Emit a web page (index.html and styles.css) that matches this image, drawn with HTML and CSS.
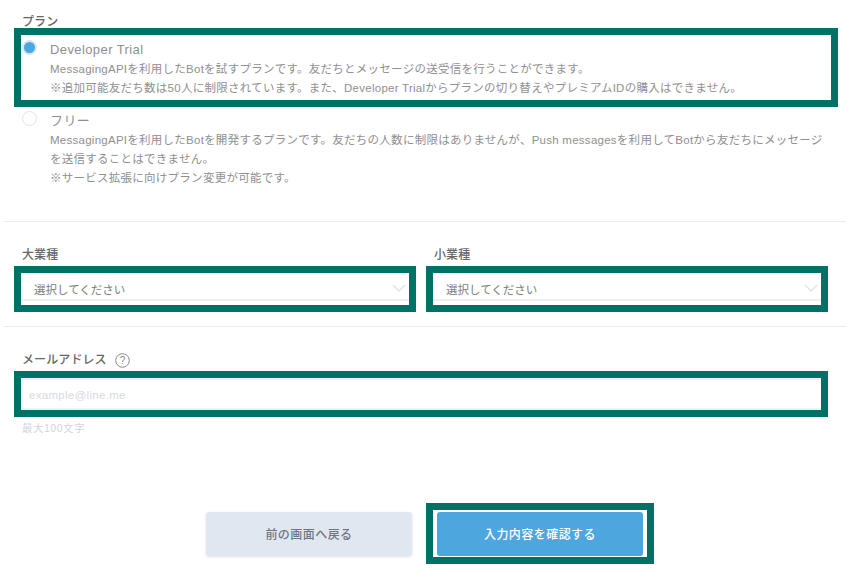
FILE: index.html
```html
<!DOCTYPE html>
<html lang="ja">
<head>
<meta charset="utf-8">
<title>プラン</title>
<link rel="stylesheet" href="styles.css">
</head>
<body>
<main class="page">
  <section class="section section-plan">
    <div class="label plan-label">プラン</div>
    <div class="mark plan-mark">
      <div class="option">
        <span class="radio radio-on"></span>
        <div class="option-body">
          <div class="option-title">Developer Trial</div>
          <div>MessagingAPIを利用したBotを試すプランです。友だちとメッセージの送受信を行うことができます。</div>
          <div>※追加可能友だち数は50人に制限されています。また、Developer Trialからプランの切り替えやプレミアムIDの購入はできません。</div>
        </div>
      </div>
    </div>
    <div class="option option-free">
      <span class="radio"></span>
      <div class="option-body">
        <div class="option-title">フリー</div>
        <div>MessagingAPIを利用したBotを開発するプランです。友だちの人数に制限はありませんが、Push messagesを利用してBotから友だちにメッセージを送信することはできません。</div>
        <div>※サービス拡張に向けプラン変更が可能です。</div>
      </div>
    </div>
  </section>

  <section class="section section-industry">
    <div class="col">
      <div class="label">大業種</div>
      <div class="mark select-mark">
        <div class="select">
          <span>選択してください</span>
          <svg class="chevron" width="14" height="8" viewBox="0 0 14 8"><path d="M1 1l6 6 6-6" fill="none" stroke="#dfe3e8" stroke-width="1.4"/></svg>
        </div>
      </div>
    </div>
    <div class="col">
      <div class="label">小業種</div>
      <div class="mark select-mark">
        <div class="select">
          <span>選択してください</span>
          <svg class="chevron" width="14" height="8" viewBox="0 0 14 8"><path d="M1 1l6 6 6-6" fill="none" stroke="#dfe3e8" stroke-width="1.4"/></svg>
        </div>
      </div>
    </div>
  </section>

  <section class="section-mail">
    <div class="label mail-label">
      <span>メールアドレス</span>
      <svg class="help" width="15" height="15" viewBox="0 0 15 15"><circle cx="7.5" cy="7.5" r="6.8" fill="none" stroke="#8a8a8a"/><text x="7.5" y="11" text-anchor="middle" class="help-q">?</text></svg>
    </div>
    <div class="mark mail-mark">
      <input class="mail-input" type="text" placeholder="example@line.me">
    </div>
    <div class="hint">最大100文字</div>
  </section>

  <div class="actions">
    <button class="btn btn-back" type="button">前の画面へ戻る</button>
    <div class="mark confirm-mark">
      <button class="btn btn-confirm" type="button">入力内容を確認する</button>
    </div>
  </div>
</main>
</body>
</html>
```
FILE: styles.css
```css
* { box-sizing: border-box; }
html, body { margin: 0; padding: 0; background: #fff; }
body {
  width: 852px;
  height: 578px;
  overflow: hidden;
  font-family: "Liberation Sans", "Noto Sans CJK JP", sans-serif;
  font-size: 11.5px;
  color: #8f8f8f;
}
.page { padding: 13px 6px 0 4px; }
.section { border-bottom: 1px solid #ebebeb; }
.label {
  font-size: 12px;
  line-height: 15px;
  font-weight: 500;
  color: #666;
  padding-left: 18px;
  letter-spacing: 0.1px;
}
.plan-label { height: 15px; line-height: 19px; }
.mark { border: 7px solid #007166; background: #fff; }

.section-plan { height: 209px; }
.plan-mark { margin-left: 10px; margin-right: 8px; height: 79px; }
.option { display: flex; line-height: 19px; letter-spacing: 0.26px; }
.plan-mark .option { padding: 6px 0 0 1px; }
.option-free { padding: 5px 22px 0 18px; }
.option-free .radio { margin-top: -1px; }
.option-body { flex: 1; }
.option-title { height: 19px; line-height: 17px; font-size: 13px; letter-spacing: 0.4px; }
.radio {
  flex: none;
  width: 15px;
  height: 15px;
  margin: -1px 13px 0 0;
  border-radius: 50%;
  border: 1px solid #e3e3e3;
  background: #fff;
}
.radio-on { border: 2px solid #d5e6f3; background: #4da6df; }

.section-industry {
  display: flex;
  gap: 10px;
  padding: 25px 18px 14px 10px;
  height: 105px;
}
.col { flex: 1; }
.col .label { padding-left: 8px; height: 19px; line-height: 17px; }
.select-mark { height: 46px; }
.select {
  position: relative;
  height: 28px;
  border-bottom: 2px solid #eef0f3;
  padding: 9px 0 0 13px;
  font-size: 11.5px;
  line-height: 16px;
  color: #7d7d7d;
}
.chevron { position: absolute; right: 3px; top: 11px; }

.section-mail { padding: 25px 18px 0 10px; }
.mail-label { display: flex; align-items: center; gap: 8px; padding-left: 8px; padding-bottom: 2px; height: 19px; }
.help-q { font: 10px "Liberation Sans", sans-serif; fill: #8a8a8a; }
.mail-mark { height: 46px; }
.mail-input {
  display: block;
  width: 100%;
  height: 32px;
  border: 0;
  border-top: 2px solid #eef0f3;
  border-bottom: 2px solid #eef0f3;
  outline: 0;
  padding: 2px 8px 0;
  font: 11.5px "Liberation Sans", "Noto Sans CJK JP", sans-serif;
  letter-spacing: 0.3px;
  background: #fff;
}
.mail-input::placeholder { color: #d5dae2; opacity: 1; }
.hint { margin-top: 4px; padding-left: 8px; font-size: 10.5px; line-height: 14px; color: #d0d5dd; letter-spacing: 0.5px; }

.actions {
  display: flex;
  align-items: flex-start;
  gap: 14px;
  margin-top: 68px;
  padding-left: 202px;
}
.btn {
  display: block;
  width: 206px;
  height: 44px;
  padding: 0 0 2px;
  border: 0;
  border-radius: 3px;
  font: 500 12px "Liberation Sans", "Noto Sans CJK JP", sans-serif;
  letter-spacing: 0.45px;
}
.btn-back {
  margin-top: 9px;
  background: #e1e7f1;
  color: #6f7580;
  box-shadow: 0 1px 3px rgba(0, 0, 0, 0.12);
}
.btn-confirm { background: #4da6dd; color: #fff; }
.confirm-mark { width: 228px; height: 61px; padding: 2px 4px 0; }
```
